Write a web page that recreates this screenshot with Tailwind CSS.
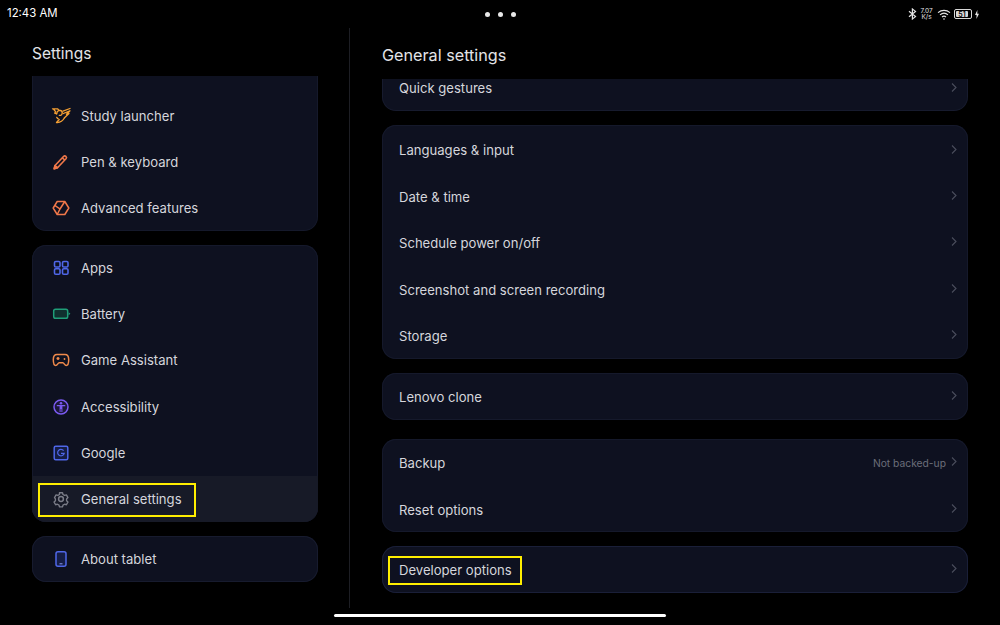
<!DOCTYPE html>
<html lang="en">
<head>
    <meta charset="UTF-8">
    <title>General settings</title>
    <script src="https://cdn.jsdelivr.net/npm/@tailwindcss/browser@4"></script>
</head>
<body class="bg-black">
<div class="relative h-[625px] w-[1000px] overflow-hidden bg-black font-['Inter',sans-serif] text-[13.1px] text-[#d5d6dc]">

    <!-- Status bar -->
    <div class="relative flex h-[28px] items-center justify-between pl-[7px] pr-[21px] text-white">
        <span class="text-[11.4px]">12:43 AM</span>
        <div class="absolute left-[485px] top-[12px] flex gap-[8px]">
            <span class="h-[5px] w-[5px] rounded-full bg-[#e8e8e8]"></span>
            <span class="h-[5px] w-[5px] rounded-full bg-[#e8e8e8]"></span>
            <span class="h-[5px] w-[5px] rounded-full bg-[#e8e8e8]"></span>
        </div>
        <div class="flex items-center">
            <svg width="9" height="12" viewBox="0 0 9 12" fill="none" stroke="#e5e5e5" stroke-width="1.2"><path d="M1 3.200 7.500 8.600 4.400 11V1l3.100 2.400L1 8.800"/></svg>
            <div class="ml-[3px] flex w-[13px] flex-col items-center text-[6.500px] leading-[6px] text-[#e5e5e5]"><span>7.07</span><span>K/s</span></div>
            <svg class="ml-[4px]" width="14" height="11" viewBox="0 0 14 11" fill="none" stroke="#e5e5e5" stroke-width="1.100"><path d="M1 3.600C4.500.6 9.500.6 13 3.600M3 5.800c2.400-2 5.600-2 8 0M5 8c1.200-1 2.800-1 4 0"/><circle cx="7" cy="10" r=".8" fill="#e5e5e5" stroke="none"/></svg>
            <div class="ml-[3px] flex h-[10px] w-[18px] items-center rounded-[2px] border border-[#d8d8d8] p-[1px]">
                <span class="flex h-full w-[12px] items-center justify-center rounded-[1px] bg-[#d8d8d8] text-[7px] font-semibold leading-none text-black">51</span>
            </div>
            <svg class="ml-[3px]" width="4" height="9" viewBox="0 0 4 9" fill="#e5e5e5"><path d="M2.400 0 0 5h1.600L1.400 9 4 3.800H2.300z"/></svg>
        </div>
    </div>

    <div class="flex h-[580px]">

        <!-- Left column -->
        <div class="w-[350px] border-r border-[#1d1e24] pl-[32px] pr-[31px]">
            <div class="flex h-[48px] items-center pt-[4px] text-[15.500px] text-[#e3e4e8]">Settings</div>

            <div class="rounded-b-[14px] border border-t-0 border-[#15192b] bg-[#0e1120] pt-[17px]">
                <div class="flex h-[46px] items-center gap-[10px] pl-[18px]">
                    <svg class="h-[20px] w-[20px]" viewBox="0 0 20 20" fill="none" stroke="#f5a033" stroke-width="1.300" stroke-linejoin="round" stroke-linecap="round"><path d="M1.500 2.800h5l1.700 1.700M2.500 3l2.200 2.800-1 1.400 2 .6"/><path d="M5.700 7.800c.2-2.400 2-3.800 3.800-3.300 1.500.4 2 1.800 1.600 3.300-.4 1.300-1.600 2-2.800 1.500"/><path d="M12 5.200 19 2.500M12.300 7.500 19 4.800 15.500 8.300 18 7.500 13.500 11.800"/><path d="M5.500 16.500c3.200.3 6.200-1.400 8-4.700M5.500 16.500l2.700-3c-1.300-.4-2.200-1.200-2.500-2.200"/></svg>
                    <span class="pt-[2px]">Study launcher</span>
                </div>
                <div class="flex h-[46px] items-center gap-[10px] pl-[18px]">
                    <svg class="h-[20px] w-[20px]" viewBox="0 0 20 20" fill="none" stroke="#f0784a" stroke-width="1.600" stroke-linejoin="round"><path d="M4 13.500 12.500 4.500c.7-.7 1.700-.7 2.400-.1s.7 1.600.1 2.300L6.500 15.700l-3.300 1z" /><path d="M3.200 16.700l.8-3.200 2.500 2.200z" fill="#f0784a"/><path d="M11.300 5.800 13.800 8"/></svg>
                    <span class="pt-[2px]">Pen &amp; keyboard</span>
                </div>
                <div class="flex h-[45px] items-center gap-[10px] pl-[18px]">
                    <svg class="h-[20px] w-[20px]" viewBox="0 0 20 20" fill="none" stroke="#f0784a" stroke-width="1.500" stroke-linejoin="round"><path d="M6.200 3.500h7.600L17.800 10l-4 6.500H6.200L2.200 10z"/><path d="M3.800 7.300 9 11l4.800-7.500M9 11l-2.800 5.500"/></svg>
                    <span class="pt-[2px]">Advanced features</span>
                </div>
            </div>

            <div class="mt-[14px] overflow-hidden rounded-[14px] bg-[#0e1120] ring-1 ring-inset ring-[#15192b]">
                <div class="flex h-[46.200px] items-center gap-[10px] pl-[19px]">
                    <svg class="h-[20px] w-[20px]" viewBox="0 0 20 20" fill="none" stroke="#4f67e8" stroke-width="1.600"><rect x="3.500" y="3.500" width="5.500" height="5.500" rx="1.300"/><rect x="11.500" y="3.500" width="5.500" height="5.500" rx="1.300"/><rect x="3.500" y="10.800" width="5.500" height="5.500" rx="1.300"/><rect x="11.500" y="10.800" width="5.500" height="5.500" rx="1.300"/></svg>
                    <span class="pt-[2px]">Apps</span>
                </div>
                <div class="flex h-[46.200px] items-center gap-[10px] pl-[19px]">
                    <svg class="h-[20px] w-[20px]" viewBox="0 0 20 20"><rect x="2.700" y="5.200" width="14" height="9" rx="1.800" fill="#10302f" stroke="#1f9e78" stroke-width="1.500"/><path d="M17.600 8.200 19.400 9.700 17.600 11.200z" fill="#1f9e78"/></svg>
                    <span class="pt-[2px]">Battery</span>
                </div>
                <div class="flex h-[46.200px] items-center gap-[10px] pl-[19px]">
                    <svg class="h-[20px] w-[20px]" viewBox="0 0 20 20" fill="none" stroke="#f08a4b" stroke-width="1.500" stroke-linejoin="round"><path d="M6 4.500h8c2.300 0 3.700 2 3.700 5 0 3-.4 6-2.500 6-1.600 0-2-2.700-3.400-2.700H8.200c-1.400 0-1.800 2.700-3.400 2.700-2.100 0-2.500-3-2.500-6 0-3 1.400-5 3.700-5z"/><path d="M5.500 8.500h3M7 7v3" /><circle cx="13.500" cy="9" r=".9" fill="#f08a4b" stroke="none"/></svg>
                    <span class="pt-[1px]">Game Assistant</span>
                </div>
                <div class="flex h-[46.200px] items-center gap-[10px] pl-[19px]">
                    <svg class="h-[20px] w-[20px]" viewBox="0 0 20 20"><circle cx="10" cy="10" r="7" fill="#1c1838" stroke="#7a5af0" stroke-width="1.500"/><circle cx="10" cy="6.300" r="1.300" fill="#7a5af0"/><path d="M5.800 8h8.400v1.200h-2.800V15h-1v-3h-.8v3h-1V9.200H5.800z" fill="#7a5af0"/></svg>
                    <span class="pt-[2px]">Accessibility</span>
                </div>
                <div class="flex h-[46.200px] items-center gap-[10px] pl-[19px]">
                    <svg class="h-[20px] w-[20px]" viewBox="0 0 20 20" fill="none" stroke="#4f67e8"><rect x="3.200" y="3.200" width="13.600" height="13.600" rx="1.500" fill="#151d45" stroke-width="1.500"/><path d="M12.600 7.600A3.300 3.300 0 1 0 13.200 10.300H10" stroke-width="1.200"/></svg>
                    <span class="pt-[2px]">Google</span>
                </div>
                <div class="relative flex h-[46px] items-center gap-[10px] bg-[#171a27] pl-[19px]">
                    <svg class="h-[20px] w-[20px]" viewBox="0 0 20 20" fill="none" stroke="#7b7d88" stroke-width="1.500" stroke-linejoin="round"><path d="M8.300 3h3.400l.5 2 1.800 1 2-.6 1.700 3-1.500 1.500v2l1.500 1.500-1.700 3-2-.6-1.800 1-.5 2H8.300l-.5-2-1.800-1-2 .6-1.700-3 1.500-1.500v-2L2.800 8.400l1.700-3 2 .6 1.800-1z" transform="translate(1 1) scale(.9)"/><circle cx="10" cy="10" r="2.400"/></svg>
                    <span class="pt-[2px]">General settings</span>
                    <div class="absolute left-[6px] top-[7px] h-[34px] w-[158px] border-2 border-[#ffee00]"></div>
                </div>
            </div>

            <div class="mt-[14px] flex h-[46px] items-center gap-[10px] rounded-[14px] bg-[#0e1120] pl-[19px] ring-1 ring-inset ring-[#171b2e]">
                <svg class="h-[20px] w-[20px]" viewBox="0 0 20 20" fill="none" stroke="#4f67e8" stroke-width="1.500"><rect x="5" y="2.800" width="10" height="14.400" rx="2" fill="#151d45"/><path d="M8.500 14.800h3" stroke="#8b9bf0" stroke-width="1"/></svg>
                <span class="pt-[2px]">About tablet</span>
            </div>
        </div>

        <!-- Right column -->
        <div class="ml-[32px] w-[586px]">
            <div class="flex h-[51px] items-center pt-[4px] text-[16.200px] text-[#e3e4e8]">General settings</div>

            <div class="flex h-[32px] items-start justify-between rounded-b-[14px] border border-t-0 border-[#171b2e] bg-[#0e1120] pl-[16px] pr-[10px]">
                <span class="leading-[18px]">Quick gestures</span>
                <svg class="mt-[4px]" width="6" height="9" viewBox="0 0 6 9" fill="none" stroke="#4a4d5c" stroke-width="1.100"><path d="M1 .5 5 4.500 1 8.500"/></svg>
            </div>

            <div class="mt-[14px] rounded-[14px] bg-[#0e1120] pt-[2px] ring-1 ring-inset ring-[#15192b]">
                <div class="flex h-[46.400px] items-center justify-between pl-[17px] pr-[11px]">
                    <span class="pt-[2px]">Languages &amp; input</span>
                    <svg class="-mt-[2px]" width="6" height="9" viewBox="0 0 6 9" fill="none" stroke="#4a4d5c" stroke-width="1.100"><path d="M1 .5 5 4.500 1 8.500"/></svg>
                </div>
                <div class="flex h-[46.400px] items-center justify-between pl-[17px] pr-[11px]">
                    <span class="pt-[2px]">Date &amp; time</span>
                    <svg class="-mt-[2px]" width="6" height="9" viewBox="0 0 6 9" fill="none" stroke="#4a4d5c" stroke-width="1.100"><path d="M1 .5 5 4.500 1 8.500"/></svg>
                </div>
                <div class="flex h-[46.400px] items-center justify-between pl-[17px] pr-[11px]">
                    <span class="pt-[2px]">Schedule power on/off</span>
                    <svg class="-mt-[2px]" width="6" height="9" viewBox="0 0 6 9" fill="none" stroke="#4a4d5c" stroke-width="1.100"><path d="M1 .5 5 4.500 1 8.500"/></svg>
                </div>
                <div class="flex h-[46.400px] items-center justify-between pl-[17px] pr-[11px]">
                    <span class="pt-[2px]">Screenshot and screen recording</span>
                    <svg class="-mt-[2px]" width="6" height="9" viewBox="0 0 6 9" fill="none" stroke="#4a4d5c" stroke-width="1.100"><path d="M1 .5 5 4.500 1 8.500"/></svg>
                </div>
                <div class="flex h-[46.400px] items-center justify-between pl-[17px] pr-[11px]">
                    <span class="pt-[2px]">Storage</span>
                    <svg class="-mt-[2px]" width="6" height="9" viewBox="0 0 6 9" fill="none" stroke="#4a4d5c" stroke-width="1.100"><path d="M1 .5 5 4.500 1 8.500"/></svg>
                </div>
            </div>

            <div class="mt-[14px] flex h-[47px] items-center justify-between rounded-[14px] bg-[#0e1120] pl-[17px] pr-[11px] pt-[1px] ring-1 ring-inset ring-[#15192b]">
                <span class="pt-[2px]">Lenovo clone</span>
                <svg class="-mt-[2px]" width="6" height="9" viewBox="0 0 6 9" fill="none" stroke="#4a4d5c" stroke-width="1.100"><path d="M1 .5 5 4.500 1 8.500"/></svg>
            </div>

            <div class="mt-[19px] rounded-[14px] bg-[#0e1120] pt-[1px] ring-1 ring-inset ring-[#15192b]">
                <div class="flex h-[46px] items-center justify-between pl-[17px] pr-[11px]">
                    <span class="pt-[2px]">Backup</span>
                    <div class="flex items-center gap-[5px]">
                        <span class="pt-[1px] text-[10.300px] text-[#6b6e7a]">Not backed-up</span>
                        <svg class="-mt-[2px]" width="6" height="9" viewBox="0 0 6 9" fill="none" stroke="#4a4d5c" stroke-width="1.100"><path d="M1 .5 5 4.500 1 8.500"/></svg>
                    </div>
                </div>
                <div class="flex h-[46px] items-center justify-between pl-[17px] pr-[11px]">
                    <span class="pt-[4px]">Reset options</span>
                    <svg class="mt-[0px]" width="6" height="9" viewBox="0 0 6 9" fill="none" stroke="#4a4d5c" stroke-width="1.100"><path d="M1 .5 5 4.500 1 8.500"/></svg>
                </div>
            </div>

            <div class="relative mt-[14px] flex h-[47px] items-center justify-between rounded-[14px] bg-[#0e1120] pl-[17px] pr-[11px] pt-[1px] ring-1 ring-inset ring-[#1a1f38]">
                <span class="pt-[1px]">Developer options</span>
                <svg class="-mt-[2px]" width="6" height="9" viewBox="0 0 6 9" fill="none" stroke="#4a4d5c" stroke-width="1.100"><path d="M1 .5 5 4.500 1 8.500"/></svg>
                <div class="absolute left-[6px] top-[10px] h-[29px] w-[134px] border-2 border-[#ffee00]"></div>
            </div>
        </div>
    </div>

    <!-- Home indicator -->
    <div class="absolute left-[334px] top-[614px] h-[3px] w-[332px] rounded-full bg-white"></div>
</div>
</body>
</html>
